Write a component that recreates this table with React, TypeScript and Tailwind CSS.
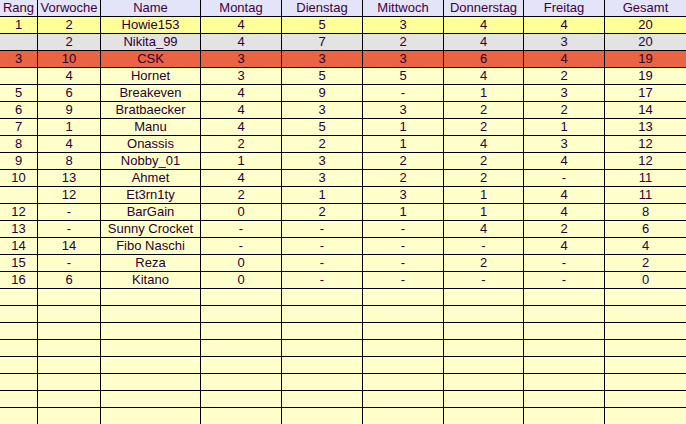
import React from "react";

const headers = ["Rang", "Vorwoche", "Name", "Montag", "Dienstag", "Mittwoch", "Donnerstag", "Freitag", "Gesamt"];

const rows: string[][] = [
  ["1", "2", "Howie153", "4", "5", "3", "4", "4", "20"],
  ["", "2", "Nikita_99", "4", "7", "2", "4", "3", "20"],
  ["3", "10", "CSK", "3", "3", "3", "6", "4", "19"],
  ["", "4", "Hornet", "3", "5", "5", "4", "2", "19"],
  ["5", "6", "Breakeven", "4", "9", "-", "1", "3", "17"],
  ["6", "9", "Bratbaecker", "4", "3", "3", "2", "2", "14"],
  ["7", "1", "Manu", "4", "5", "1", "2", "1", "13"],
  ["8", "4", "Onassis", "2", "2", "1", "4", "3", "12"],
  ["9", "8", "Nobby_01", "1", "3", "2", "2", "4", "12"],
  ["10", "13", "Ahmet", "4", "3", "2", "2", "-", "11"],
  ["", "12", "Et3rn1ty", "2", "1", "3", "1", "4", "11"],
  ["12", "-", "BarGain", "0", "2", "1", "1", "4", "8"],
  ["13", "-", "Sunny Crocket", "-", "-", "-", "4", "2", "6"],
  ["14", "14", "Fibo Naschi", "-", "-", "-", "-", "4", "4"],
  ["15", "-", "Reza", "0", "-", "-", "2", "-", "2"],
  ["16", "6", "Kitano", "0", "-", "-", "-", "-", "0"],
];

const empty = Array.from({ length: 9 }, () => Array(9).fill(""));

function rowBg(i: number) {
  if (i === 0) return "bg-[#ffff99]";
  if (i === 1) return "bg-[#e3e3e3]";
  if (i === 2) return "bg-[#ea6342]";
  return "bg-[#ffffcc]";
}

export default function App() {
  const all = [...rows, ...empty];
  return (
    <div
      className="w-[686px] h-[424px] overflow-hidden bg-[#ffffcc] text-[13px] text-[#2a0033]"
      style={{ fontFamily: '"Liberation Sans", Arial, sans-serif' }}
    >
      <div className="grid grid-cols-[38px_63px_100px_81px_81px_81px_80px_81px_81px]">
        {headers.map((h, c) => (
          <div
            key={h}
            className={`h-[17px] border-b border-black bg-[#e4e4f8] text-center leading-[16px] text-[#3d0040] ${c < 8 ? "border-r" : ""}`}
          >
            {h}
          </div>
        ))}
        {all.map((r, i) =>
          r.map((v, c) => (
            <div
              key={`${i}-${c}`}
              className={`h-[17px] border-b border-black text-center leading-[16px] whitespace-nowrap ${rowBg(i)} ${c < 8 ? "border-r" : ""}`}
            >
              {v}
            </div>
          ))
        )}
      </div>
    </div>
  );
}
